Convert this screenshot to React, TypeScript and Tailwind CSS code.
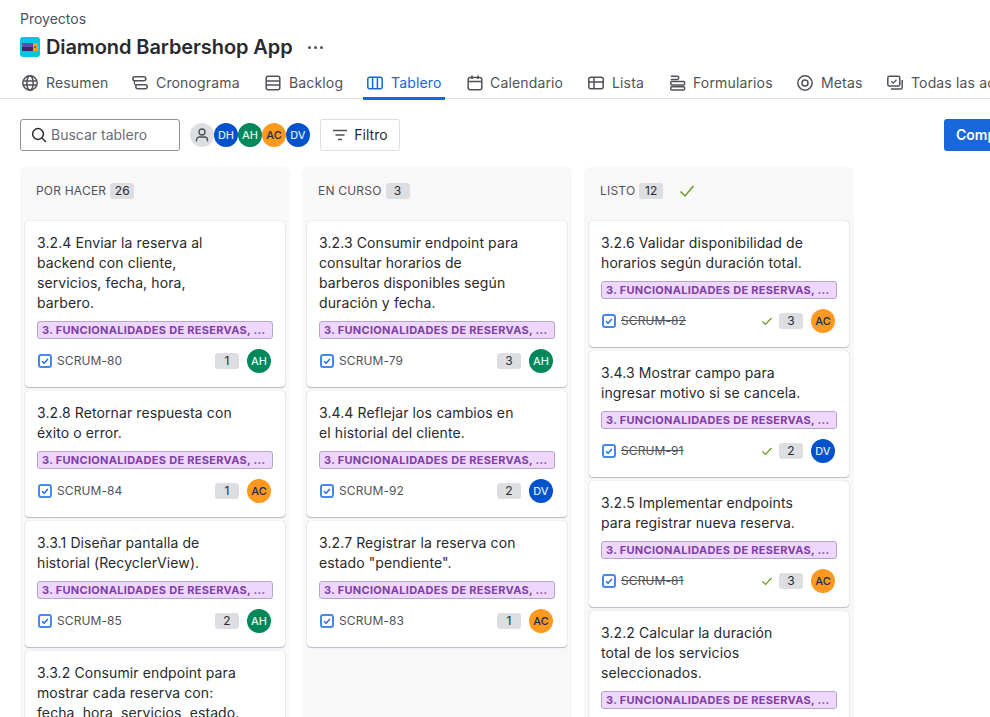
import type { ReactNode } from "react";

const font = "font-['Inter','Noto_Sans',sans-serif]";

function Icon({ children, className = "" }: { children: ReactNode; className?: string }) {
  return (
    <svg viewBox="0 0 16 16" fill="none" stroke="currentColor" strokeWidth="1.5" className={`w-4 h-4 shrink-0 ${className}`}>
      {children}
    </svg>
  );
}

const tabs: { label: string; icon: ReactNode; active?: boolean; width: string; gap?: string }[] = [
  {
    label: "Resumen",
    width: "w-[110px]",
    icon: (
      <>
        <circle cx="8" cy="8" r="7.2" />
        <ellipse cx="8" cy="8" rx="3.2" ry="7.2" />
        <path d="M1 6h14M1 10h14" strokeWidth="1.3" />
      </>
    ),
  },
  {
    label: "Cronograma",
    width: "w-[133px]",
    icon: (
      <>
        <rect x="0.8" y="1.8" width="13" height="4" rx="2" />
        <rect x="3.8" y="9.8" width="11.4" height="4" rx="2" />
        <path d="M2.4 5.8v2.4a2 2 0 0 0 1.8 2" strokeWidth="1.3" />
      </>
    ),
  },
  {
    label: "Backlog",
    width: "w-[102px]",
    icon: (
      <>
        <rect x="1.2" y="1.2" width="13.6" height="13.6" rx="2" />
        <path d="M1.2 6h13.6M1.2 10h13.6" />
      </>
    ),
  },
  {
    label: "Tablero",
    width: "w-[100px]",
    active: true,
    icon: (
      <>
        <rect x="0.8" y="2.2" width="14.4" height="11.6" rx="2" />
        <path d="M5.6 2.2v11.6M10.4 2.2v11.6" />
      </>
    ),
  },
  {
    label: "Calendario",
    width: "w-[121px]",
    gap: "gap-[7px]",
    icon: (
      <>
        <rect x="1.2" y="2.5" width="13.6" height="12.3" rx="2" />
        <path d="M1.2 6.5h13.6M5 0.6v3.4M11 0.6v3.4" />
      </>
    ),
  },
  {
    label: "Lista",
    width: "w-[82px]",
    icon: (
      <>
        <rect x="0.8" y="2.2" width="14.4" height="11.6" rx="2" />
        <path d="M0.8 7h14.4M6 2.2v11.6" />
      </>
    ),
  },
  {
    label: "Formularios",
    width: "w-[127px]",
    gap: "gap-[7px]",
    icon: (
      <>
        <path d="M0.8 1.2h6.4a1.6 1.6 0 0 1 0 3.2H0.8" />
        <rect x="0.8" y="6.6" width="13.8" height="3.4" rx="1" />
        <rect x="0.8" y="11.8" width="13.8" height="3.2" rx="1" />
      </>
    ),
  },
  {
    label: "Metas",
    width: "w-[90px]",
    icon: (
      <>
        <circle cx="8" cy="8" r="7.2" />
        <circle cx="8" cy="8" r="3" />
      </>
    ),
  },
  {
    label: "Todas las actividades",
    width: "w-[200px]",
    icon: (
      <>
        <rect x="0.8" y="1.2" width="12" height="9.8" rx="1.6" />
        <path d="M15.2 5v7.5a1.6 1.6 0 0 1-1.6 1.6H4" />
        <path d="M4.5 6.3l1.8 1.8 3.2-3.4" strokeWidth="1.3" />
      </>
    ),
  },
];

const avatarColors: Record<string, string> = {
  AH: "bg-[#00875a] text-[#e3fcef]",
  AC: "bg-[#ff991f] text-[#172b4d]",
  DV: "bg-[#0052cc] text-[#deebff]",
  DH: "bg-[#0052cc] text-[#deebff]",
};

function Avatar({ who, className = "" }: { who: string; className?: string }) {
  return (
    <span className={`w-6 h-6 rounded-full flex items-center justify-center text-[11px] font-medium shrink-0 ${avatarColors[who]} ${className}`}>
      {who}
    </span>
  );
}

type Issue = { title: string[]; key: string; points: number; who: string };

function Card({ issue, done }: { issue: Issue; done?: boolean }) {
  return (
    <div className="bg-white rounded-[4px] p-3 pb-[14px] shadow-[0_1px_1px_#091e4240,0_0_1px_#091e424f]">
      <div className="text-sm leading-5 text-[#292a2e] tracking-[0.1px]">
        {issue.title.map((line) => (
          <div key={line} className="whitespace-nowrap">{line}</div>
        ))}
      </div>
      <div className="mt-2 h-[18px] rounded-[3px] bg-[#eed7fc] border border-[#b8a6c8] px-1 flex items-center text-[11px] font-bold tracking-[0.3px] text-[#803fa5] whitespace-nowrap overflow-hidden">
        3. FUNCIONALIDADES DE RESERVAS, ...
      </div>
      <div className="mt-[10px] mr-[2px] h-6 flex items-center">
        <span className="w-[14px] h-[14px] ml-[1px] rounded-[3px] border-2 border-[#4688ec] flex items-center justify-center shrink-0">
          <svg viewBox="0 0 12 12" fill="none" stroke="#1868db" strokeWidth="1.6" className="w-[10px] h-[10px]">
            <path d="M2.5 6.2l2.4 2.4 4.6-5" />
          </svg>
        </span>
        <span className={`ml-[5px] text-xs tracking-[0.1px] text-[#505258] ${done ? "line-through" : ""}`}>{issue.key}</span>
        <span className="ml-auto flex items-center">
          {done && (
            <svg viewBox="0 0 12 12" fill="none" stroke="#6a9a23" strokeWidth="1.2" className="w-3 h-3 mr-[6px]">
              <path d="M1.5 6.5l3 3 6-6.5" />
            </svg>
          )}
          <span className="w-6 h-4 rounded-[3px] bg-[#dddee1] flex items-center justify-center text-xs text-[#292a2e]">{issue.points}</span>
          <Avatar who={issue.who} className="ml-2" />
        </span>
      </div>
    </div>
  );
}

const columns: { name: string; count: number; done?: boolean; issues: Issue[] }[] = [
  {
    name: "POR HACER",
    count: 26,
    issues: [
      { title: ["3.2.4 Enviar la reserva al", "backend con cliente,", "servicios, fecha, hora,", "barbero."], key: "SCRUM-80", points: 1, who: "AH" },
      { title: ["3.2.8 Retornar respuesta con", "éxito o error."], key: "SCRUM-84", points: 1, who: "AC" },
      { title: ["3.3.1 Diseñar pantalla de", "historial (RecyclerView)."], key: "SCRUM-85", points: 2, who: "AH" },
      { title: ["3.3.2 Consumir endpoint para", "mostrar cada reserva con:", "fecha, hora, servicios, estado."], key: "SCRUM-86", points: 2, who: "AH" },
    ],
  },
  {
    name: "EN CURSO",
    count: 3,
    issues: [
      { title: ["3.2.3 Consumir endpoint para", "consultar horarios de", "barberos disponibles según", "duración y fecha."], key: "SCRUM-79", points: 3, who: "AH" },
      { title: ["3.4.4 Reflejar los cambios en", "el historial del cliente."], key: "SCRUM-92", points: 2, who: "DV" },
      { title: ["3.2.7 Registrar la reserva con", 'estado "pendiente".'], key: "SCRUM-83", points: 1, who: "AC" },
    ],
  },
  {
    name: "LISTO",
    count: 12,
    done: true,
    issues: [
      { title: ["3.2.6 Validar disponibilidad de", "horarios según duración total."], key: "SCRUM-82", points: 3, who: "AC" },
      { title: ["3.4.3 Mostrar campo para", "ingresar motivo si se cancela."], key: "SCRUM-91", points: 2, who: "DV" },
      { title: ["3.2.5 Implementar endpoints", "para registrar nueva reserva."], key: "SCRUM-81", points: 3, who: "AC" },
      { title: ["3.2.2 Calcular la duración", "total de los servicios", "seleccionados."], key: "SCRUM-78", points: 2, who: "AC" },
    ],
  },
];

export default function App() {
  return (
    <div className={`w-[990px] h-[717px] overflow-hidden bg-white ${font} flex flex-col`}>
      <div className="pl-5 pt-[10px] text-sm leading-[18px] text-[#505258]">Proyectos</div>
      <div className="pl-5 mt-[5px] h-7 flex items-center">
        <svg viewBox="0 0 20 20" className="w-5 h-5 shrink-0">
          <rect width="20" height="20" rx="3" fill="#00c7e6" />
          <rect x="2" y="6" width="11" height="8" fill="#5e4db2" />
          <rect x="2" y="10" width="11" height="4" fill="#352c63" />
          <rect x="13" y="6" width="5" height="8" rx="1" fill="#fca700" />
          <circle cx="15" cy="10" r="1" fill="#ae2e24" />
        </svg>
        <span className="ml-[6px] text-xl font-semibold tracking-[-0.1px] text-[#292a2e] whitespace-nowrap">Diamond Barbershop App</span>
        <span className="ml-[15px] flex gap-[3px]">
          <span className="w-[3px] h-[3px] rounded-full bg-[#505258]" />
          <span className="w-[3px] h-[3px] rounded-full bg-[#505258]" />
          <span className="w-[3px] h-[3px] rounded-full bg-[#505258]" />
        </span>
      </div>

      <div className="mt-[5px] h-[33px] pl-[22px] flex border-b border-[#dddee1] whitespace-nowrap shrink-0">
        {tabs.map((t) => (
          <div key={t.label} className={`${t.width} shrink-0 h-[33px] flex items-start pt-[3px]`}>
            <div className={`flex items-center h-[28px] relative ${t.gap ?? "gap-2"} ${t.active ? "text-[#1868db]" : "text-[#505258]"}`}>
              <Icon>{t.icon}</Icon>
              <span className="text-sm tracking-[0.15px]">{t.label}</span>
              {t.active && <span className="absolute left-[-4px] right-[-4px] top-[28px] h-[3px] bg-[#1868db]" />}
            </div>
          </div>
        ))}
      </div>

      <div className="mt-5 pl-5 h-8 flex items-center whitespace-nowrap shrink-0">
        <div className="w-40 h-8 shrink-0 rounded-[3px] border border-[#8c8f97] flex items-center pl-[10px] text-sm text-[#6b6e76]">
          <svg viewBox="0 0 16 16" fill="none" stroke="#292a2e" strokeWidth="1.5" className="w-4 h-4 mr-1">
            <circle cx="7" cy="7" r="5.4" />
            <path d="M11 11l4 4" />
          </svg>
          Buscar tablero
        </div>
        <span className="ml-[10px] w-6 h-6 shrink-0 rounded-full bg-[#dddee1] flex items-center justify-center">
          <svg viewBox="0 0 16 16" fill="none" stroke="#505258" strokeWidth="1.4" className="w-4 h-4">
            <circle cx="8" cy="5" r="3" />
            <path d="M2.5 14.5v-1.5a3 3 0 0 1 3-3h5a3 3 0 0 1 3 3v1.5" />
          </svg>
        </span>
        <Avatar who="DH" />
        <Avatar who="AH" />
        <Avatar who="AC" />
        <Avatar who="DV" />
        <div className="ml-[10px] w-20 h-8 shrink-0 rounded-[3px] border border-[#dddee1] flex items-center justify-center gap-[6px] text-sm text-[#292a2e]">
          <svg viewBox="0 0 16 16" fill="none" stroke="#505258" strokeWidth="1.5" className="w-4 h-4">
            <path d="M1 3.5h14M3.5 8h9M6 12.5h4" />
          </svg>
          Filtro
        </div>
        <div className="ml-[544px] w-[110px] h-8 rounded-[3px] bg-[#1868db] text-white text-sm font-semibold flex items-center pl-3 shrink-0">
          Compartir
        </div>
      </div>

      <div className="mt-4 pl-5 flex gap-3 flex-1 min-h-0">
        {columns.map((c) => (
          <div key={c.name} className="w-[270px] shrink-0 bg-[#f8f8f8] rounded-t-[6px] px-[5px]">
            <div className="h-[54px] pb-[6px] pl-[11px] flex items-center text-xs tracking-[0.2px] text-[#505258]">
              {c.name}
              <span className="ml-1 w-6 h-4 rounded-[3px] bg-[#dddee1] flex items-center justify-center text-xs text-[#292a2e]">{c.count}</span>
              {c.done && (
                <svg viewBox="0 0 16 16" fill="none" stroke="#6a9a23" strokeWidth="1.5" className="w-4 h-4 ml-4">
                  <path d="M1.5 8.5l4.5 4.5 8.5-10" />
                </svg>
              )}
            </div>
            <div className="flex flex-col gap-1">
              {c.issues.map((i) => (
                <Card key={i.key} issue={i} done={c.done} />
              ))}
            </div>
          </div>
        ))}
      </div>
    </div>
  );
}
